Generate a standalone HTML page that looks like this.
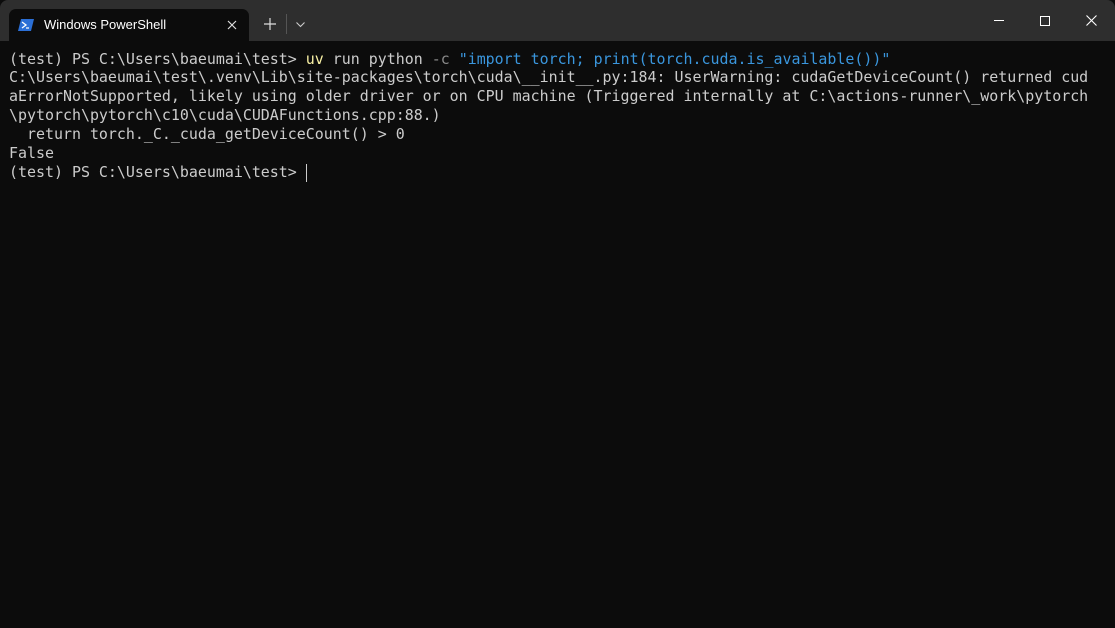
<!DOCTYPE html>
<html><head><style>
html,body{margin:0;padding:0;width:1115px;height:628px;overflow:hidden;background:#0c0c0c}
#title{position:absolute;left:0;top:0;width:1115px;height:41px;background:#2e2e2e;border-radius:8px 8px 0 0}
#tab{position:absolute;left:9px;top:9px;width:240px;height:32px;background:#0c0c0c;border-radius:7px 7px 0 0}
#tab .t{position:absolute;left:35px;top:8px;font:13px "Liberation Sans",sans-serif;color:#fff}
#term{position:absolute;left:9px;top:49.6px;font:14.95px/18.83px "DejaVu Sans Mono","Liberation Mono",monospace;color:#cccccc;white-space:pre}
.y{color:#f9f1a5}.g{color:#8a8a8a}.b{color:#3a96dd}
</style></head><body>
<div id="title">
<div id="tab">
<svg style="position:absolute;left:9px;top:9px" width="16" height="14" viewBox="0 0 16 14"><path d="M3 1h13l-3 12H0z" fill="#2b6fd6"/><path d="M4 4l4 3-4 3" stroke="#fff" stroke-width="1.3" fill="none"/><path d="M8 10h3" stroke="#fff" stroke-width="1.2"/></svg>
<span class="t">Windows PowerShell</span>
<svg style="position:absolute;left:218px;top:11px" width="10" height="10"><path d="M1 1l8 8M9 1l-8 8" stroke="#ddd" stroke-width="1.2"/></svg>
</div>
<svg style="position:absolute;left:264px;top:18px" width="12" height="12"><path d="M6 0v12M0 6h12" stroke="#ddd" stroke-width="1.2"/></svg>
<div style="position:absolute;left:286px;top:14px;width:1px;height:20px;background:#555"></div>
<svg style="position:absolute;left:296px;top:22px" width="9" height="6"><path d="M0.5 0.5l4 4 4-4" stroke="#ccc" stroke-width="1.1" fill="none"/></svg>
<div style="position:absolute;left:994px;top:20px;width:10px;height:1px;background:#fff"></div>
<div style="position:absolute;left:1040px;top:16px;width:8px;height:8px;border:1px solid #fff"></div>
<svg style="position:absolute;left:1086px;top:15px" width="11" height="11"><path d="M0.5 0.5l10 10M10.5 0.5l-10 10" stroke="#fff" stroke-width="1.1"/></svg>
</div>
<div id="term">(test) PS C:\Users\baeumai\test&gt; <span class="y">uv</span> run python <span class="g">-c</span> <span class="b">"import torch; print(torch.cuda.is_available())"</span>
C:\Users\baeumai\test\.venv\Lib\site-packages\torch\cuda\__init__.py:184: UserWarning: cudaGetDeviceCount() returned cud
aErrorNotSupported, likely using older driver or on CPU machine (Triggered internally at C:\actions-runner\_work\pytorch
\pytorch\pytorch\c10\cuda\CUDAFunctions.cpp:88.)
  return torch._C._cuda_getDeviceCount() &gt; 0
False
(test) PS C:\Users\baeumai\test&gt; </div>
<div style="position:absolute;left:306px;top:164px;width:1px;height:18px;background:#ccc"></div>
</body></html>
